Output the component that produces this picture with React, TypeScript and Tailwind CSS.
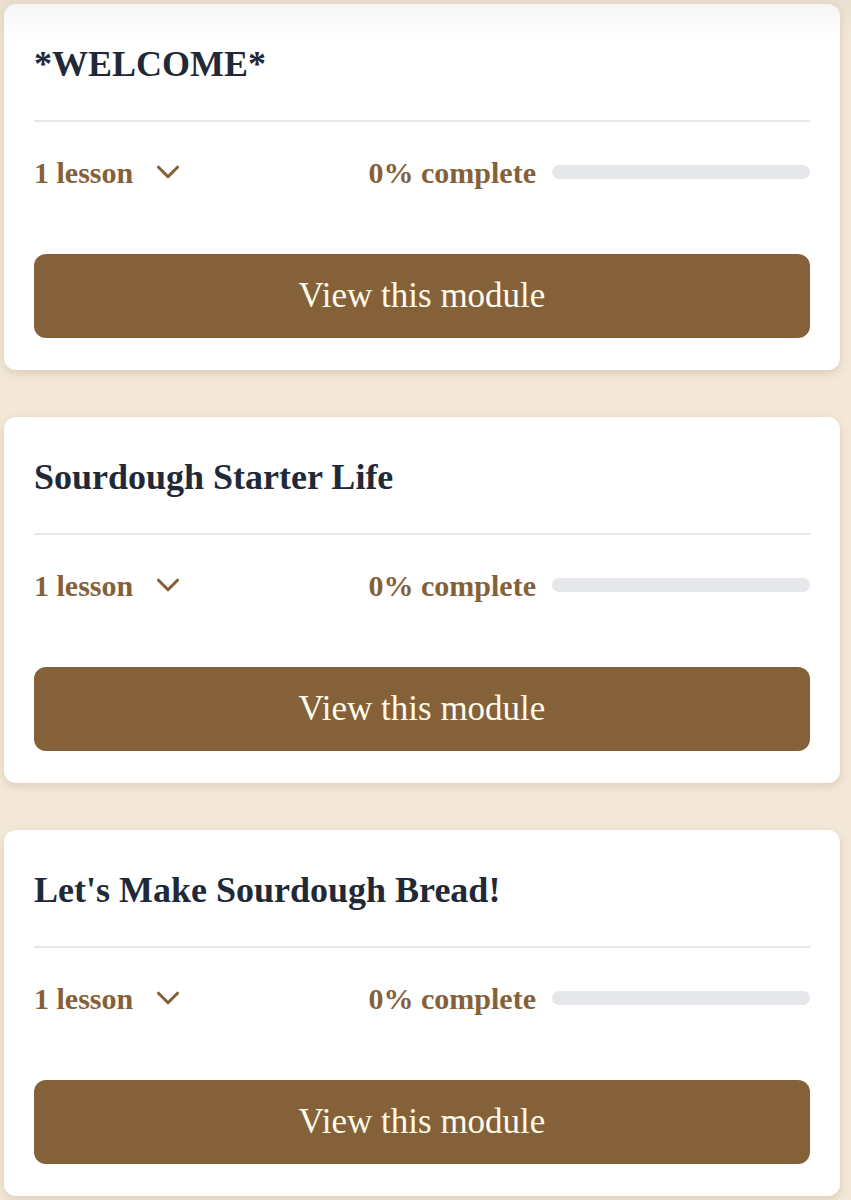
import React from 'react';
import { ChevronDown } from 'lucide-react';

type Module = {
    title: string;
    lessons: number;
    progress: number;
};

const modules: Module[] = [
    { title: '*WELCOME*', lessons: 1, progress: 0 },
    { title: 'Sourdough Starter Life', lessons: 1, progress: 0 },
    { title: "Let's Make Sourdough Bread!", lessons: 1, progress: 0 },
];

function ModuleCard({ module }: { module: Module }) {
    return (
        <div className="relative bg-white rounded-[12px] shadow-[0_3px_8px_rgba(120,90,50,0.2)] px-[30px] pt-[40px] pb-[32px]">
            <h2 className="text-[36px] leading-[40px] font-bold text-[#1f2937] font-['Liberation_Serif',serif] pb-[36px] border-b-2 border-[#e5e7eb]">
                {module.title}
            </h2>

            {/* lessons toggle + progress */}
            <div className="flex items-center justify-between mt-[33px] h-[34px]">
                <button className="flex items-center gap-[16px] text-[#85613a] text-[30px] font-bold font-['Liberation_Serif',serif]">
                    <span>{module.lessons} lesson{module.lessons === 1 ? '' : 's'}</span>
                    <ChevronDown className="w-[38px] h-[38px]" strokeWidth={2} />
                </button>
                <div className="flex items-center gap-[16px]">
                    <span className="text-[#85613a] text-[30px] font-bold font-['Liberation_Serif',serif]">{module.progress}% complete</span>
                    <div className="w-[258px] h-[14px] bg-[#e5e7eb] rounded-full overflow-hidden">
                        <div className="h-full bg-[#85613a] rounded-full" style={{ width: `${module.progress}%` }} />
                    </div>
                </div>
            </div>

            <button className="mt-[65px] w-full h-[84px] bg-[#85613a] rounded-[12px] text-[#fffbeb] text-[35px] font-['Liberation_Serif',serif]">
                View this module
            </button>
        </div>
    );
}

export default function App() {
    return (
        <div className="relative min-h-screen bg-[#f3e8d8] pl-[4px] pr-[11px] pt-[4px] pb-[4px]">
            <div className="flex flex-col gap-[47px]">
                {modules.map((m) => (
                    <ModuleCard key={m.title} module={m} />
                ))}
            </div>
            <div className="pointer-events-none absolute top-0 left-0 right-0 h-[40px] bg-gradient-to-b from-[rgba(0,0,0,0.04)] to-transparent" />
        </div>
    );
}
